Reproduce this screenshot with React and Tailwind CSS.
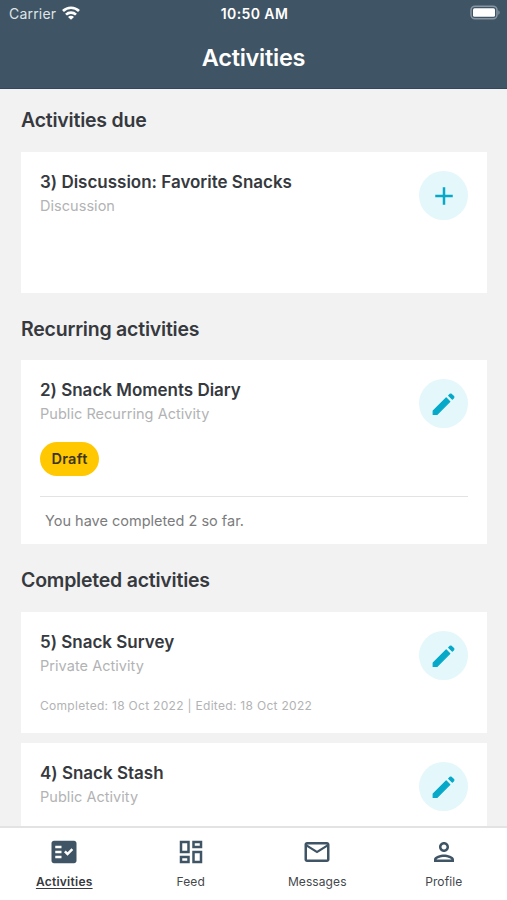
import { MdAdd, MdFactCheck, MdMailOutline, MdOutlineDashboard, MdOutlinePerson } from "react-icons/md";

function StatusBar() {
  return (
    <div className="grid h-[27px] grid-cols-3 items-center pr-[7px] pl-[9px] text-[14px] text-white">
      <div className="flex items-center gap-1.5">
        <span className="tracking-[0.2px] text-[#dfe4e8]">Carrier</span>
        <svg className="-mt-0.5" width="18" height="14" viewBox="0 0 18 14" fill="none" stroke="white" strokeWidth="2.7">
          <path d="M1 5a11.5 11.5 0 0 1 16 0" />
          <path d="M4 8.6a7.2 7.2 0 0 1 10 0" />
          <path d="M9 13.8 6 10.9a4.2 4.2 0 0 1 6 0z" fill="white" stroke="none" />
        </svg>
      </div>
      <span className="text-center font-semibold tracking-[0.4px]">10:50 AM</span>
      <svg className="-mt-0.5 justify-self-end" width="30" height="15" viewBox="0 0 30 15">
        <rect x="1" y="1.2" width="26" height="12.6" rx="4" fill="none" stroke="#8796a2" strokeWidth="1.5" />
        <rect x="3" y="3.2" width="22" height="8.6" rx="1.5" fill="white" />
        <path d="M28.3 5.2c1.8.8 1.8 3.8 0 4.6z" fill="#8796a2" />
      </svg>
    </div>
  );
}

function Pencil({ size }) {
  return (
    <svg width={size} height={size} viewBox="0 0 30 30" fill="currentColor" stroke="currentColor" strokeWidth="1.2" strokeLinejoin="round">
      <path d="M4.2 21.9 17.2 9l3.6 3.6L7.9 25.500H4.2z" />
      <path d="m19.7 6.600 1.300-1.300q.7-.6 1.400 0l2.200 2.200q.6.700 0 1.400L23.300 10.200z" />
    </svg>
  );
}

function SectionTitle({ children }) {
  return <h2 className="text-[19.5px] leading-6 font-semibold tracking-[-0.22px] text-[#36393e]">{children}</h2>;
}

function Card({ title, kind, icon: Icon = Pencil, className, children }) {
  return (
    <article className={`bg-white px-[19px] pt-[19px] ${className}`}>
      <div className="flex h-[49px] justify-between">
        <div>
          <h3 className="text-[17px] leading-[22px] font-semibold tracking-[-0.01px] text-[#36393e]">{title}</h3>
          <p className="mt-[3px] text-[14.5px] leading-5 tracking-[0.04px] text-[#b2b3b4]">{kind}</p>
        </div>
        <button className="flex size-[49px] items-center justify-center rounded-full bg-[#e4f7fb] text-[#06a9c8]">
          <Icon size={30} />
        </button>
      </div>
      {children}
    </article>
  );
}

const tabs = [
  { label: "Activities", icon: MdFactCheck, active: true },
  { label: "Feed", icon: MdOutlineDashboard },
  { label: "Messages", icon: MdMailOutline },
  { label: "Profile", icon: MdOutlinePerson },
];

export default function App() {
  return (
    <div className="flex h-[900px] w-[507px] flex-col overflow-hidden bg-[#f2f2f2] font-['Inter','Liberation_Sans',sans-serif]">
      <header className="h-[89px] shrink-0 border-b border-[#34465a] bg-[#3f5464]">
        <StatusBar />
        <h1 className="mt-[15px] text-center text-[23.5px] leading-8 font-semibold tracking-[-0.25px] text-white">Activities</h1>
      </header>
      <main className="min-h-0 flex-1 overflow-hidden pt-[19px] pr-5 pl-[21px]">
        <SectionTitle>Activities due</SectionTitle>
        <Card className="mt-5 mb-6 h-[141px]" title="3) Discussion: Favorite Snacks" kind="Discussion" icon={MdAdd} />
        <SectionTitle>Recurring activities</SectionTitle>
        <Card className="mt-[19px] mb-6 h-[184px]" title="2) Snack Moments Diary" kind="Public Recurring Activity">
          <span className="mt-[14px] flex h-[34px] w-[59px] items-center justify-center rounded-full bg-[#ffc800] text-[14.5px] font-semibold tracking-[0.3px] text-[#3b3520]">
            Draft
          </span>
          <p className="mt-5 border-t border-[#e2e3e4] pt-[14px] pl-[5px] text-[14.5px] leading-5 text-[#7b7c7e]">
            You have completed 2 so far.
          </p>
        </Card>
        <SectionTitle>Completed activities</SectionTitle>
        <Card className="mt-5 h-[121px]" title="5) Snack Survey" kind="Private Activity">
          <p className="mt-[18px] text-[12px] leading-4 tracking-[0.3px] text-[#b2b3b4]">
            Completed: 18 Oct 2022 | Edited: 18 Oct 2022
          </p>
        </Card>
        <Card className="mt-2.5 h-[121px]" title="4) Snack Stash" kind="Public Activity" />
      </main>
      <nav className="grid h-[74px] shrink-0 grid-cols-4 border-t-2 border-[#e3e3e3] bg-white pl-px">
        {tabs.map(({ label, icon: Icon, active }) => (
          <a key={label} className="flex flex-col items-center pt-[9px] text-[#3f5464]">
            <Icon size={30} />
            <span
              className={`mt-[7px] text-[12px] leading-4 ${
                active
                  ? "font-semibold tracking-[0.25px] text-[#36393e] underline underline-offset-2"
                  : "tracking-[0.1px] text-[#44474b]"
              }`}
            >
              {label}
            </span>
          </a>
        ))}
      </nav>
    </div>
  );
}
